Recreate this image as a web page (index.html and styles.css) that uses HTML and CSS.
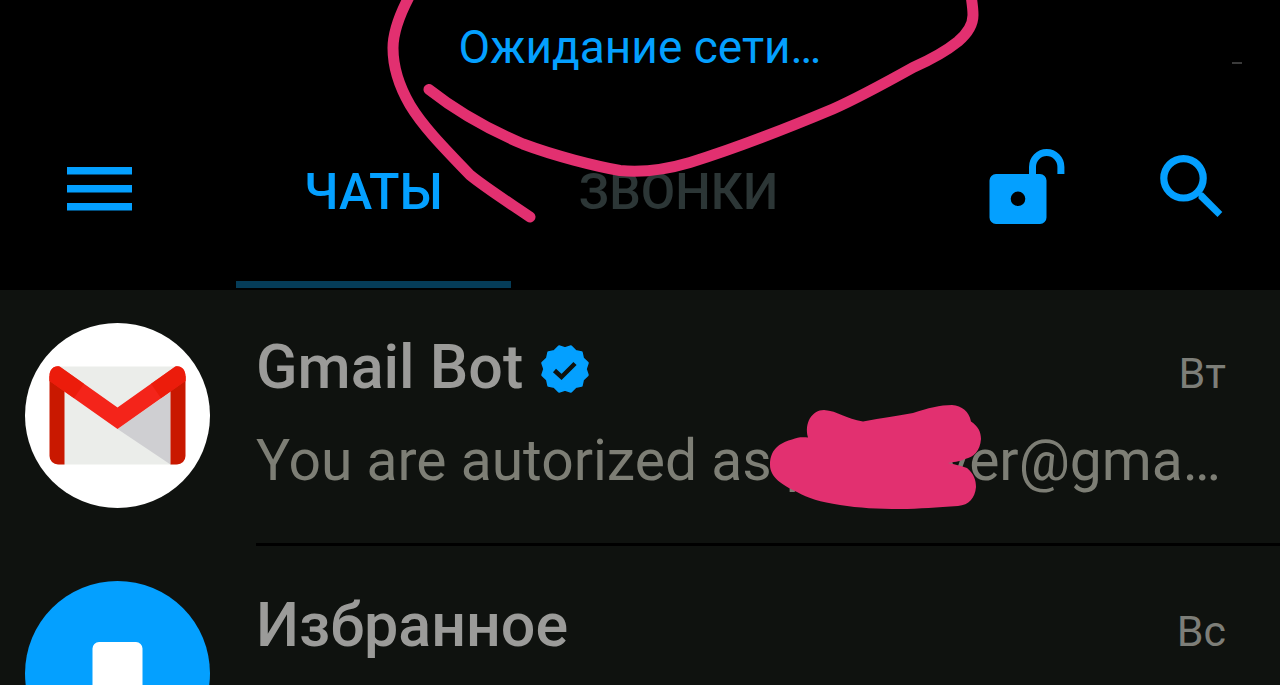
FILE: index.html
```html
<!DOCTYPE html>
<html lang="ru">
<head>
    <meta charset="UTF-8">
    <meta name="viewport" content="width=device-width, initial-scale=1.0">
    <title>Чаты</title>
    <link rel="stylesheet" href="styles.css">
</head>
<body>
    <div class="app">
        <header class="header">
            <div class="status">
                <p class="status-text">Ожидание сети…</p>
                <span class="status-mark"></span>
            </div>
            <div class="toolbar">
                <button class="icon-btn" type="button" aria-label="Меню">
                    <svg width="65" height="44" viewBox="0 0 65 44" fill="#04a0ff">
                        <rect width="65" height="7.5"/>
                        <rect y="18" width="65" height="7.5"/>
                        <rect y="36" width="65" height="7.5"/>
                    </svg>
                </button>
                <nav class="tabs">
                    <a class="tab active" href="#chats">ЧАТЫ</a>
                    <a class="tab" href="#calls">ЗВОНКИ</a>
                </nav>
                <div class="actions">
                    <button class="icon-btn" type="button" aria-label="Блокировка">
                        <svg width="76" height="75" viewBox="0 0 76 75">
                            <path d="M43.500 27V18a14.200 14.500 0 0 1 28.400 0v7" fill="none" stroke="#04a0ff" stroke-width="7"/>
                            <path fill="#04a0ff" fill-rule="evenodd" d="M7 25h44a6.500 6.500 0 0 1 6.500 6.500v37a6.500 6.500 0 0 1-6.500 6.500H7a6.500 6.500 0 0 1-6.500-6.500V31.500A6.500 6.500 0 0 1 7 25zM29 42.500a7.300 7.300 0 1 0 0 14.600a7.300 7.300 0 1 0 0-14.600z"/>
                        </svg>
                    </button>
                    <button class="icon-btn" type="button" aria-label="Поиск">
                        <svg width="63" height="63" viewBox="0 0 63 63">
                            <circle cx="23.500" cy="23.300" r="19.700" fill="none" stroke="#04a0ff" stroke-width="7.200"/>
                            <path d="M43 37.500L62.300 57L57.500 62L38.500 43.500L38.500 37.500z" fill="#04a0ff"/>
                        </svg>
                    </button>
                </div>
            </div>
            <svg class="scribble" width="1280" height="290" viewBox="0 0 1280 290" aria-hidden="true">
                <path d="M410 -5C402 10 393 30 393 48C393 68 399 86 410 105C422 125 440 144 470 175C486 188 508 202 530 217"/>
                <path d="M429 89.500C460 114 490 130 523 144C555 156 595 166 620 170.500C645 173 668 169 690 162.500C740 147 790 127 833 109C860 97 887 82 913 67.500C930 60 945 52 958 41.500C968 33 973 25 973 15C973 8 972 3 971 -5"/>
            </svg>
        </header>

        <main class="chats">
            <a class="chat" href="#gmail-bot">
                <svg class="avatar" width="185" height="185" viewBox="0 0 185 185">
                    <circle cx="92.500" cy="92.500" r="92.500" fill="#fff"/>
                    <path d="M34 43.500H151V141.500H34z" fill="#ebedea"/>
                    <path d="M92.500 106L145.500 69V141.500z" fill="#cfcfd2"/>
                    <path d="M24.500 53V133a8.500 8.500 0 0 0 8.500 8.500h6.500V62zM160.500 53V133a8.500 8.500 0 0 1-8.500 8.500h-6.500V62z" fill="#c91800"/>
                    <path d="M35 43.700L92.500 84.500L150 43.700C156 42 160.500 47 160.500 53V58L92.500 106L24.500 58V53C24.500 46 29.500 42 35 43.700z" fill="#f4241a"/>
                    <path d="M24.500 53C24.500 46 29.500 42 35 43.700L59 60.700L49 75.300L24.500 58zM160.500 53C160.500 47 156 42 150 43.700L126 60.700L136 75.300L160.500 58z" fill="#e81a06" opacity=".7"/>
                </svg>
                <div class="chat-body">
                    <div class="chat-top">
                        <h2 class="name">Gmail Bot</h2>
                        <svg class="verified" width="48" height="48" viewBox="-24 -24 48 48" role="img" aria-label="Подтверждён">
                            <path d="M0-20.500L6-22.500L10.500-17.800L16.500-16.500L17.800-10.500L22.500-6L20.500 0L22.500 6L17.800 10.500L16.500 16.500L10.500 17.800L6 22.500L0 20.500L-6 22.500L-10.500 17.800L-16.500 16.500L-17.800 10.500L-22.500 6L-20.500 0L-22.500-6L-17.800-10.500L-16.500-16.500L-10.500-17.800L-6-22.500z" fill="#04a0ff" stroke="#04a0ff" stroke-width="2.500" stroke-linejoin="round"/>
                            <path d="M-10.500 1.500L-3.500 8L10 -5.500" fill="none" stroke="#0f120f" stroke-width="4.500"/>
                        </svg>
                        <time class="date">Вт</time>
                    </div>
                    <p class="preview">
                        <span>You are autorized as p</span>
                        <span>ver@gma…</span>
                        <svg class="redaction" width="212" height="106" viewBox="769 404 212 106" aria-hidden="true">
                            <path d="M808 437.500C804 423 812 410 824 410C838 411 846 419 863 421.500C882 418 898 416 913 413C928 408 940 405 952 405C962 406 969 411 971 421.500C978 426 981 432 981 439C980 451 974 457 965 459C959 462 953 462 948 463C955 464 961 466 967 468C974 474 976 480 976 487C975 498 969 505 958 506C937 507 920 509 900 509C878 509 859 508 840 505C820 502 808 498 797 492C782 485 770 477 770 465C770 447 783 442 792 439.500C798 437 802 437 808 437.500z" fill="#e23070"/>
                        </svg>
                    </p>
                </div>
            </a>
            <a class="chat" href="#saved">
                <svg class="avatar" width="185" height="185" viewBox="0 0 185 185">
                    <circle cx="92.500" cy="92.500" r="92.500" fill="#04a0ff"/>
                    <path d="M74 61h37a6.500 6.500 0 0 1 6.500 6.500V128L92.500 112L67.500 128V67.500A6.500 6.500 0 0 1 74 61z" fill="#fff"/>
                </svg>
                <div class="chat-body">
                    <div class="chat-top">
                        <h2 class="name">Избранное</h2>
                        <time class="date">Вс</time>
                    </div>
                </div>
            </a>
        </main>
    </div>
</body>
</html>
```
FILE: styles.css
```css
* { margin: 0; padding: 0; box-sizing: border-box; }
body {
    font-family: Roboto, "Noto Sans", sans-serif;
    background-color: #0f120f;
}
svg {
    display: block;
    flex-shrink: 0;
}
a {
    color: inherit;
    text-decoration: none;
}
.app {
    height: 100vh;
    overflow: hidden;
}

/* Header */
.header {
    position: relative;
    background-color: #000;
    padding-bottom: 2px;
}
.status {
    display: grid;
    grid-template-columns: 1fr auto 1fr;
    height: 92px;
    padding: 20px 38px 0;
}
.status-text {
    grid-column: 2;
    font-size: 46px;
    line-height: 54px;
    color: #04a0ff;
}
.status-mark {
    justify-self: end;
    width: 10px;
    height: 2px;
    margin-top: 42px;
    background-color: #3a3a3a;
}
.toolbar {
    display: flex;
    height: 196px;
    padding: 0 57px 2px 67px;
    padding-bottom: 0;
}
.icon-btn {
    align-self: center;
    padding-bottom: 2px;
    border: none;
    background: none;
    cursor: pointer;
}
.tabs {
    display: flex;
    margin-left: 104px;
}
.tab {
    display: flex;
    align-items: center;
    padding: 10px 68px 0;
    border-bottom: 7px solid transparent;
    font-size: 50px;
    font-weight: 500;
    color: #2c3636;
}
.tab.active {
    color: #04a0ff;
    border-bottom-color: #053c58;
}
.actions {
    display: flex;
    gap: 95px;
    margin-left: auto;
    padding-bottom: 5px;
}
.scribble {
    position: absolute;
    top: 0;
    left: 50%;
    transform: translateX(-50%);
    fill: none;
    stroke: #e23070;
    stroke-width: 11;
    stroke-linecap: round;
    stroke-linejoin: round;
    pointer-events: none;
}

/* Chat list */
.chat {
    display: flex;
    gap: 46px;
    padding: 33px 0 2px 25px;
}
.chat-body {
    flex: 1;
    min-width: 0;
    height: 223px;
    padding: 9px 54px 0 0;
    border-bottom: 3px solid #000;
}
.chat-top {
    display: flex;
    align-items: baseline;
}
.name {
    font-size: 61px;
    font-weight: 500;
    line-height: 70px;
    color: #9b9b99;
}
.verified {
    align-self: center;
    margin: 4px 0 0 18px;
}
.date {
    margin-left: auto;
    font-size: 43px;
    color: #7d7e78;
}
.preview {
    position: relative;
    display: flex;
    justify-content: space-between;
    margin-top: 25px;
    padding-right: 5px;
    font-size: 57px;
    line-height: 68px;
    color: #7d7e75;
    white-space: nowrap;
}
.redaction {
    position: absolute;
    top: -23px;
    right: 245px;
}
```
